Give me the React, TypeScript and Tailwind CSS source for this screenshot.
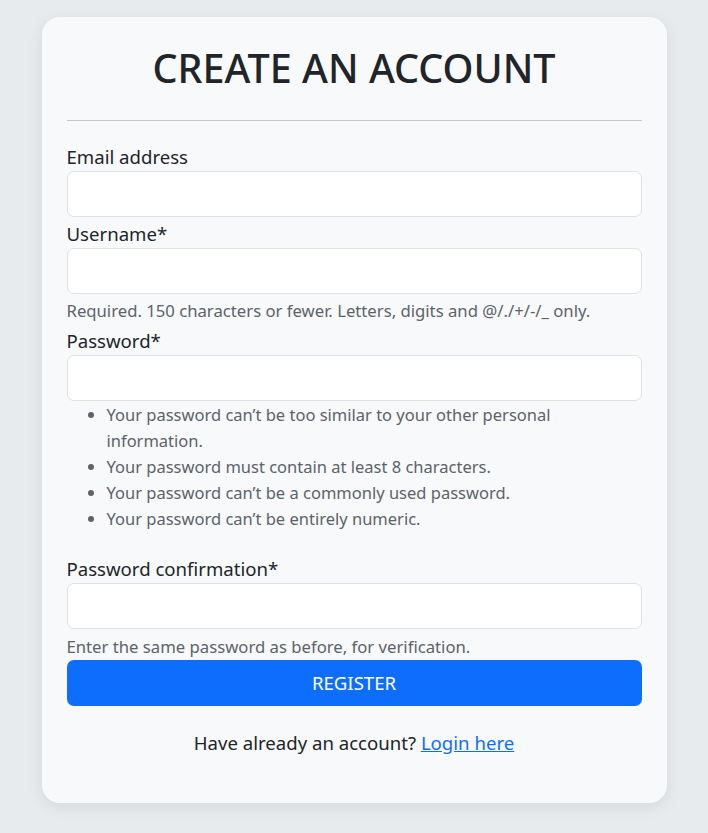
import React from 'react'

const font = { fontFamily: '"Noto Sans", "Open Sans", sans-serif' }

function Field({ label, type = 'text', first = false }: { label: string; type?: string; first?: boolean }) {
  return (
    <div className={first ? '' : 'mt-[3px]'}>
      <label className="block text-[18.6px] leading-[28px] text-[#212529]">{label}</label>
      <input
        type={type}
        className="block h-[46px] w-full rounded-[7px] border border-[#dee2e6] bg-white px-3 outline-none"
      />
    </div>
  )
}

export default function App() {
  const rules = [
    'Your password can’t be too similar to your other personal information.',
    'Your password must contain at least 8 characters.',
    'Your password can’t be a commonly used password.',
    'Your password can’t be entirely numeric.',
  ]

  return (
    <div className="min-h-[833px] bg-[#e8ebee] pt-[17px]" style={font}>
      <div className="mx-auto w-[625px] rounded-[18px] bg-[#f8f9fa] px-[25px] pt-[22px] pb-[46px] shadow-[0_4px_16px_rgba(0,0,0,0.08)]">
        <h1 className="text-center text-[39.5px] leading-[58px] font-medium text-[#212529]">
          CREATE AN ACCOUNT
        </h1>
        <hr className="mt-[23px] border-t border-[#c6c7c9]" />

        <form className="mt-[22px]">
          <Field label="Email address" type="email" first />
          <Field label="Username*" />
          <p className="mt-[3px] text-[16.7px] leading-[27px] text-[#5c636a]">
            Required. 150 characters or fewer. Letters, digits and @/./+/-/_ only.
          </p>
          <Field label="Password*" type="password" />
          <ul className="mt-[1px] mb-[23px] list-disc pl-[40px] text-[16.5px] leading-[26px] text-[#5c636a]">
            {rules.map((r) => (
              <li key={r} className="pr-[80px]">
                {r}
              </li>
            ))}
          </ul>
          <Field label="Password confirmation*" type="password" />
          <p className="mt-[4px] text-[16.7px] leading-[27px] text-[#5c636a]">
            Enter the same password as before, for verification.
          </p>
          <button
            type="button"
            className="block h-[46px] w-full rounded-[7px] bg-[#0d6efd] text-[18.6px] text-white"
          >
            REGISTER
          </button>
        </form>

        <p className="mt-[23px] text-center text-[18.6px] leading-[28px] text-[#212529]">
          Have already an account?{' '}
          <a href="#" className="text-[#0d6efd] underline">
            Login here
          </a>
        </p>
      </div>
    </div>
  )
}
